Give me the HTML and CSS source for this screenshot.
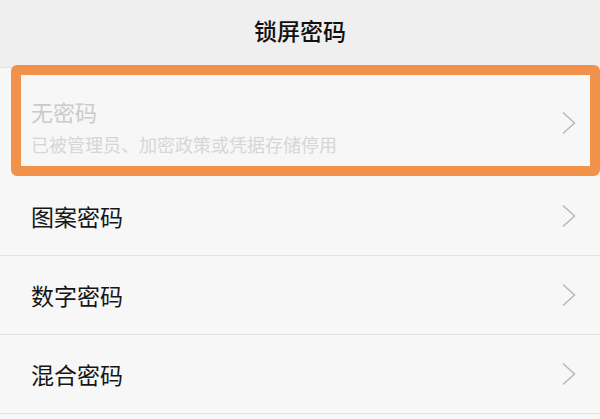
FILE: index.html
```html
<!doctype html>
<html lang="zh-CN">
<head>
    <meta charset="UTF-8">
    <meta name="viewport" content="width=device-width, initial-scale=1.0">
    <title>锁屏密码</title>
    <link rel="stylesheet" href="styles.css">
</head>
<body>
    <div class="header">
        <h1>锁屏密码</h1>
    </div>

    <ul class="list">
        <li class="item item-disabled">
            <div class="item-text">
                <div class="item-title">无密码</div>
                <div class="item-sub">已被管理员、加密政策或凭据存储停用</div>
            </div>
            <svg class="chevron" width="14" height="24" viewBox="0 0 14 24"><path d="M1 1.5 L12.5 12 L1 22.5"/></svg>
            <div class="highlight"></div>
        </li>
        <li class="item">
            <div class="item-title">图案密码</div>
            <svg class="chevron" width="14" height="24" viewBox="0 0 14 24"><path d="M1 1.5 L12.5 12 L1 22.5"/></svg>
        </li>
        <li class="item">
            <div class="item-title">数字密码</div>
            <svg class="chevron" width="14" height="24" viewBox="0 0 14 24"><path d="M1 1.5 L12.5 12 L1 22.5"/></svg>
        </li>
        <li class="item">
            <div class="item-title">混合密码</div>
            <svg class="chevron" width="14" height="24" viewBox="0 0 14 24"><path d="M1 1.5 L12.5 12 L1 22.5"/></svg>
        </li>
    </ul>
</body>
</html>
```

FILE: styles.css
```css
body {
    font-family: "Noto Sans CJK SC", "Noto Sans", sans-serif;
    background-color: #f7f7f7;
    margin: 0;
    padding: 0;
    overflow: hidden;
}

.header {
    height: 68px;
    background: #efefef;
    border-bottom: 1px solid #e3e3e3;
    display: flex;
    justify-content: center;
    align-items: center;
    box-sizing: border-box;
}

.header h1 {
    margin: 0 0 8px;
    font-size: 23px;
    font-weight: 500;
    color: #111;
    line-height: 30px;
}

.list {
    list-style: none;
    margin: 0;
    padding: 0;
}

.item {
    position: relative;
    display: flex;
    align-items: center;
    justify-content: space-between;
    height: 78px;
    padding: 0 24px 0 31px;
    border-bottom: 1px solid #e3e3e3;
}

.item-title {
    font-size: 23px;
    line-height: 30px;
    color: #161616;
}

.item-disabled {
    height: 109px;
    border-bottom: none;
}

.item-disabled .item-text {
    padding-top: 8px;
}

.item-disabled .item-title {
    font-size: 22px;
    line-height: 28px;
    color: #cbcbcb;
}

.item-disabled .item-sub {
    margin-top: 7px;
    font-size: 18px;
    line-height: 24px;
    color: #d6d6d6;
}

.chevron {
    fill: none;
    stroke: #b8b8b8;
    stroke-width: 1.5;
}

.highlight {
    position: absolute;
    top: -3px;
    left: 11px;
    right: 0;
    bottom: 1px;
    border: 10px solid #f2924a;
    border-radius: 6px;
}
```
